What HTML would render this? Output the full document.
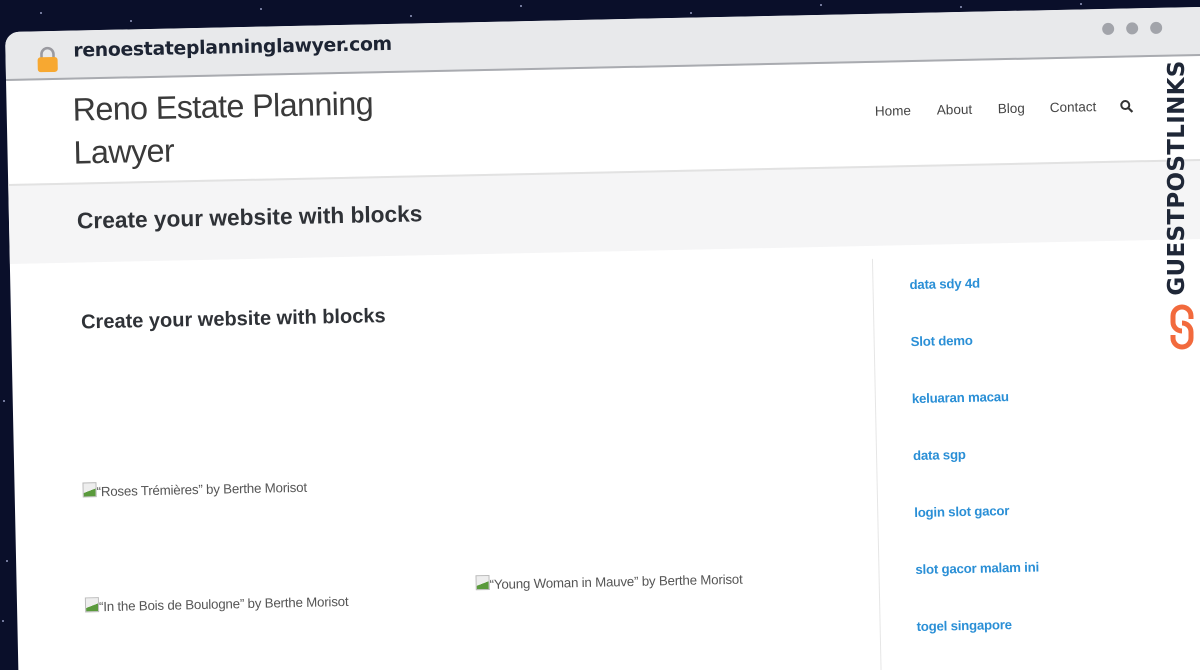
<!DOCTYPE html>
<html><head><meta charset="utf-8"><style>
html,body{margin:0;padding:0;width:1200px;height:670px;overflow:hidden;}
body{background:#0a0f2a;font-family:"Liberation Sans",sans-serif;}
#wrap{position:absolute;left:0;top:0;width:1200px;height:670px;overflow:hidden;}
.star{position:absolute;width:2px;height:2px;background:#cfd6ff;border-radius:50%;opacity:.7}
.frame{position:absolute;left:5px;top:32px;width:1210px;height:680px;background:#fff;border-radius:14px 14px 0 0;transform-origin:0 0;transform:rotate(-1.2deg);overflow:hidden;}
.bar{position:absolute;left:0;top:0;width:100%;height:47px;background:#e8e9eb;border-bottom:2px solid #a9abb0;}
.url{position:absolute;left:68px;top:10px;font-family:"DejaVu Sans",sans-serif;font-size:18.8px;color:#1d2433;font-weight:600;letter-spacing:-0.3px}
.lock{position:absolute;left:31px;top:15px;}
.dot{position:absolute;top:14px;width:12px;height:12px;border-radius:50%;background:#a2a4aa}
.title{position:absolute;left:66px;top:58px;font-size:32.3px;line-height:43px;color:#3a3a3a;letter-spacing:-0.6px}
.nav{position:absolute;top:90px;font-size:13.5px;color:#444}
.hdr{position:absolute;left:0;top:152px;width:100%;height:78px;background:#f5f5f6;border-top:2px solid #e2e2e2}
.h1{position:absolute;left:68px;top:177px;font-size:22.7px;font-weight:bold;color:#2f3237}
.h2{position:absolute;left:70px;top:281px;font-size:20px;font-weight:bold;color:#2f3237}
.img{position:absolute;font-size:13.3px;color:#555;letter-spacing:-0.2px}
.img i{display:inline-block;width:12px;height:13px;border:1px solid #bbb;vertical-align:-1px;background:linear-gradient(160deg,#eee 55%,#5a9a3c 56%);}
.side{position:absolute;left:862px;top:245px;width:1px;height:500px;background:#e6e6e6}
.lnk{position:absolute;left:899px;font-size:13.2px;font-weight:bold;color:#2a8fd6;letter-spacing:-0.2px}
.gpl{position:absolute;left:1177px;top:178px;transform:translate(-50%,-50%) rotate(-90deg);font-family:"DejaVu Sans",sans-serif;font-weight:bold;font-size:23px;color:#1f2737;white-space:nowrap;letter-spacing:0.3px}
</style></head><body><div id="wrap">
<div class="star" style="left:40px;top:12px"></div><div class="star" style="left:130px;top:20px"></div><div class="star" style="left:260px;top:8px"></div><div class="star" style="left:410px;top:15px"></div><div class="star" style="left:520px;top:5px"></div><div class="star" style="left:690px;top:12px"></div><div class="star" style="left:820px;top:4px"></div><div class="star" style="left:960px;top:6px"></div><div class="star" style="left:3px;top:400px"></div><div class="star" style="left:6px;top:560px"></div><div class="star" style="left:2px;top:620px"></div><div class="star" style="left:1080px;top:3px"></div>
<div class="frame">
 <div class="bar">
  <svg class="lock" width="22" height="26" viewBox="0 0 22 26"><path d="M5 12V8a6 6 0 0 1 12 0v4" fill="none" stroke="#9a9aa0" stroke-width="2.6"/><rect x="1" y="11" width="20" height="15" rx="3" fill="#f7a831"/></svg>
  <div class="url">renoestateplanninglawyer.com</div>
  <div class="dot" style="left:1097px"></div><div class="dot" style="left:1121px"></div><div class="dot" style="left:1145px"></div>
 </div>
 <div class="title">Reno Estate Planning<br>Lawyer</div>
 <div class="nav" style="left:868px">Home</div>
 <div class="nav" style="left:930px">About</div>
 <div class="nav" style="left:991px">Blog</div>
 <div class="nav" style="left:1043px">Contact</div>
 <svg style="position:absolute;left:1113px;top:91px" width="14" height="14" viewBox="0 0 14 14"><circle cx="5.5" cy="5.5" r="4" fill="none" stroke="#333" stroke-width="2"/><path d="M8.5 8.5l4 4" stroke="#333" stroke-width="2.2"/></svg>
 <div class="hdr"></div>
 <div class="h1">Create your website with blocks</div>
 <div class="h2">Create your website with blocks</div>
 <div class="img" style="left:68px;top:452px"><i></i>“Roses Trémières” by Berthe Morisot</div>
 <div class="img" style="left:68px;top:567px"><i></i>“In the Bois de Boulogne” by Berthe Morisot</div>
 <div class="img" style="left:459px;top:553px"><i></i>“Young Woman in Mauve” by Berthe Morisot</div>
 <div class="side"></div>
 <div class="lnk" style="top:264px">data sdy 4d</div>
 <div class="lnk" style="top:321px">Slot demo</div>
 <div class="lnk" style="top:378px">keluaran macau</div>
 <div class="lnk" style="top:435px">data sgp</div>
 <div class="lnk" style="top:492px">login slot gacor</div>
 <div class="lnk" style="top:549px">slot gacor malam ini</div>
 <div class="lnk" style="top:606px">togel singapore</div>
</div>
<div class="gpl">GUESTPOSTLINKS</div>
<svg style="position:absolute;left:1169px;top:303px" width="26" height="48" viewBox="0 0 26 48"><path d="M13 4a9 9 0 0 0-9 9v6a9 9 0 0 0 9 9" fill="none" stroke="#f26a3d" stroke-width="5"/><path d="M13 20a9 9 0 0 1 9 9v6a9 9 0 0 1-9 9" fill="none" stroke="#f26a3d" stroke-width="5"/><path d="M13 4a9 9 0 0 1 9 9v3" fill="none" stroke="#f26a3d" stroke-width="5"/><path d="M13 44a9 9 0 0 1-9-9v-3" fill="none" stroke="#f26a3d" stroke-width="5"/></svg>
</div></body></html>
